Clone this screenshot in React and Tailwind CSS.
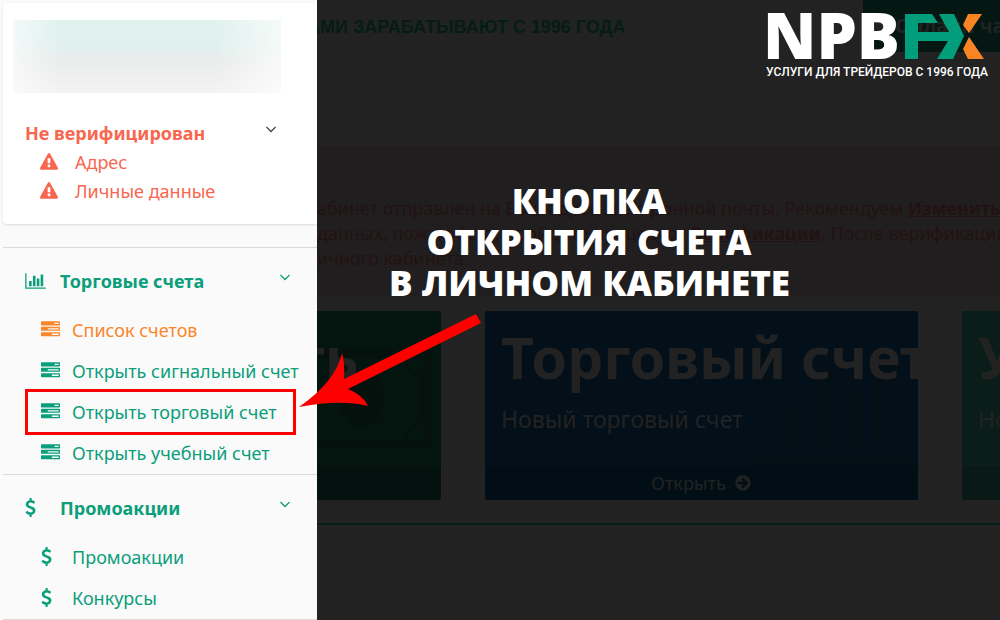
const ICONS = {
  tasks: 'M1024 1408h640v-128h-640v128zm-384-512h1024v-128h-1024v128zm640-512h384v-128h-384v128zm512 832v256q0 26-19 45t-45 19h-1664q-26 0-45-19t-19-45v-256q0-26 19-45t45-19h1664q26 0 45 19t19 45zm0-512v256q0 26-19 45t-45 19h-1664q-26 0-45-19t-19-45v-256q0-26 19-45t45-19h1664q26 0 45 19t19 45zm0-512v256q0 26-19 45t-45 19h-1664q-26 0-45-19t-19-45v-256q0-26 19-45t45-19h1664q26 0 45 19t19 45z',
  chart: 'M640 896v512h-256v-512h256zm384-512v1024h-256v-1024h256zm1024 1152v128h-2048v-1536h128v1408h1920zm-640-896v768h-256v-768h256zm384-384v1152h-256v-1152h256z',
  usd: 'M1362 1185q0 153-99.5 263.5t-258.5 136.5v175q0 14-9 23t-23 9h-135q-13 0-22.5-9.5t-9.5-22.5v-175q-66-9-127.5-31t-101.5-44.5-74-48-46.5-37.5-17.5-18q-17-21-2-41l103-135q7-10 23-12 15-2 24 9l2 2q113 99 243 125 37 8 74 8 81 0 142.5-43t61.5-122q0-28-15-53t-33.5-42-58.5-37.5-66-32-80-32.5q-39-16-61.5-25t-61.5-26.5-62.5-31-56.5-35.5-53.5-42.5-43.5-49-35.5-58-21-66.5-8.5-78q0-138 98-242t255-134v-180q0-13 9.5-22.5t22.5-9.5h135q14 0 23 9t9 23v176q57 6 110.5 23t87 33.5 63.5 37.5 39 29 15 14q17 18 5 38l-81 146q-8 15-23 16-14 3-27-7-3-3-14.5-12t-39-26.5-58.5-32-74.5-26-85.5-11.5q-95 0-155 43t-60 111q0 26 8.5 48t29.5 41.5 39.5 33 56 31 60.5 27 70 27.5q53 20 81 31.5t76 35 75.5 42.5 62 50 53 63.5 31.5 76.5 13 94z',
  warning: 'M1024 1375v-190q0-14-9.5-23.5t-22.5-9.5h-192q-13 0-22.5 9.5t-9.5 23.5v190q0 14 9.5 23.5t22.5 9.5h192q13 0 22.5-9.5t9.5-23.5zm-2-374l18-459q0-12-10-19-13-11-24-11h-220q-11 0-24 11-10 7-10 21l17 457q0 10 10 16.5t24 6.5h185q14 0 23.5-6.5t10.5-16.5zm-14-934l768 1408q35 63-2 126-17 29-46.5 46t-63.5 17h-1536q-34 0-63.5-17t-46.5-46q-37-63-2-126l768-1408q17-31 47-49t65-18 65 18 47 49z',
  arrow: 'M1413 896q0-27-18-45l-91-91-362-362q-18-18-45-18t-45 18l-91 91q-18 18-18 45t18 45l189 189h-502q-26 0-45 19t-19 45v128q0 26 19 45t45 19h502l-189 189q-18 18-18 45t18 45l91 91q18 18 45 18t45-18l362-362 91-91q18-18 18-45zm251 0q0 209-103 385.5t-279.5 279.5-385.5 103-385.5-103-279.5-279.5-103-385.5 103-385.5 279.5-279.5 385.5-103 385.5 103 279.5 279.5 103 385.5z',
  down: 'M1395 736q0 13-10 23l-466 466q-10 10-23 10t-23-10l-466-466q-10-10-10-23t10-23l50-50q10-10 23-10t23 10l393 393 393-393q10-10 23-10t23 10l50 50q10 10 10 23z',
};

function Icon({ name, className }) {
  return (
    <svg viewBox={name === 'chart' ? '0 0 2048 1792' : '0 0 1792 1792'} className={className} fill="currentColor" aria-hidden="true">
      <path d={ICONS[name]} />
    </svg>
  );
}

const accounts = [
  { label: 'Список счетов', active: true },
  { label: 'Открыть сигнальный счет' },
  { label: 'Открыть торговый счет', marked: true },
  { label: 'Открыть учебный счет' },
];

const promos = [{ label: 'Промоакции' }, { label: 'Конкурсы' }];

function MenuGroup({ icon, title, items, itemIcon }) {
  return (
    <section className="ml-[3px] border-t border-[#d9d9d9] text-[#0b9e7a]">
      <button className="flex h-[61px] w-full items-center pt-1 pr-[23px] pl-[22px] text-left text-lg font-bold">
        <span className="w-[35px]">
          <Icon name={icon} className={icon === 'chart' ? 'h-[18px] w-[21px]' : '-ml-1 size-[19px]'} />
        </span>
        <span className="flex-1">{title}</span>
        <Icon name="down" className="mb-2 size-[18px]" />
      </button>
      <ul className="pb-px">
        {items.map((item) => (
          <li key={item.label} className="relative">
            <a href="#" className={`flex h-[41px] items-center pl-[38px] text-lg whitespace-nowrap ${item.active ? 'text-[#fb8529]' : ''}`}>
              <span className="w-[31px]">
                <Icon name={itemIcon} className={itemIcon === 'usd' ? '-ml-1 size-[19px]' : 'size-[19px]'} />
              </span>
              {item.label}
            </a>
            {item.marked && <span className="absolute -top-0.5 -bottom-[3px] left-[22px] w-[271px] border-3 border-[#fe0000]" />}
          </li>
        ))}
      </ul>
    </section>
  );
}

function Sidebar() {
  return (
    <aside className="w-[317px] shrink-0 bg-[#fafafa]">
      <div className="mt-[3px] ml-[3px] h-[221px] rounded-l bg-white pt-[17px] text-[#f8664f] shadow">
        <div className="ml-[10px] h-[73px] w-[268px] bg-[linear-gradient(90deg,#ffffff99,transparent_18%,transparent_75%,#ffffffaa),linear-gradient(180deg,#e0f2ee,#e0f0ed_35%,#ebecec_60%,#f3f3f3)]" />
        <button className="mt-[26px] flex w-full items-center pr-[37px] pl-[22px] text-left text-lg font-bold">
          <span className="flex-1">Не верифицирован</span>
          <Icon name="down" className="mb-2 size-[18px] text-[#444]" />
        </button>
        {['Адрес', 'Личные данные'].map((label) => (
          <a key={label} href="#" className="flex h-[29px] items-center pl-[37px] text-lg">
            <Icon name="warning" className="mr-[17px] size-[18px]" />
            {label}
          </a>
        ))}
      </div>
      <div className="mt-[23px]">
        <MenuGroup icon="chart" title="Торговые счета" items={accounts} itemIcon="tasks" />
        <MenuGroup icon="usd" title="Промоакции" items={promos} itemIcon="usd" />
        <div className="ml-[3px] border-t border-[#d9d9d9]" />
      </div>
    </aside>
  );
}

function Tile({ title, text, action, className, children }) {
  return (
    <article className={`relative flex h-[189px] flex-col overflow-hidden rounded-xs text-[#222222] ${className}`}>
      {children}
      <div className="relative flex-1 px-4 pt-1.5">
        <h2 className="text-[57px] leading-[80px] font-bold whitespace-nowrap">{title}</h2>
        <p className="mt-1.5 text-[23px] leading-8 whitespace-nowrap">{text}</p>
      </div>
      <a href="#" className="relative flex h-[34px] items-center justify-center gap-2 bg-black/10 text-lg">
        {action && (
          <>
            {action}
            <Icon name="arrow" className="size-[18px]" />
          </>
        )}
      </a>
    </article>
  );
}

function Cabinet() {
  return (
    <main className="min-w-0 flex-1 overflow-hidden bg-[#222222]">
      <header className="flex h-[146px] items-start justify-between">
        <p className="-ml-2.5 pt-[13px] font-['Liberation_Sans',sans-serif] text-lg font-bold whitespace-nowrap text-[#051c16]">АМИ ЗАРАБАТЫВАЮТ С 1996 ГОДА</p>
        <button className="flex h-[52px] w-[137px] items-center gap-2 overflow-hidden rounded-bl bg-[#041712] pl-2 text-xl font-bold whitespace-nowrap text-[#222222]">
          <svg viewBox="0 0 16 16" className="size-4 shrink-0" fill="currentColor" aria-hidden="true">
            <path d="M8 1c4 0 7 3 7 6s-3 6-7 6c-1 0-2 0-3-1-1 2-3 3-4 3 1-1 1-3 1-4-1-1-1-2-1-4 0-3 3-6 7-6z" />
          </svg>
          Онлайн чат
        </button>
      </header>
      <div className="h-[151px] border-y border-[#251c1e] bg-[#211e1f] pt-[49px] text-lg leading-[25px] whitespace-nowrap text-[#231213]">
        <p>абинет отправлен на Ваш адрес электронной почты. Рекомендуем <a href="#" className="font-bold underline">Изменить</a></p>
        <p>данных, пожалуйста, пройдите процедуру <a href="#" className="font-bold underline">Верификации</a>. После верификации</p>
        <p>ичного кабинета.</p>
      </div>
      <div className="mt-[14px] grid grid-cols-[124px_1fr_38px] gap-11">
        <Tile title={<span className="-ml-[37px]">ть</span>} className="rounded-l-none bg-[#041510]">
          <svg viewBox="0 0 124 140" className="absolute top-8 left-0 w-full" fill="none" stroke="#04110d" strokeWidth="8" aria-hidden="true">
            <path d="M0 11h112v90H0" />
            <path d="M0 101h88q0-17 18-22V34Q88 30 88 11" strokeWidth="2" />
            <ellipse cx="45" cy="56" rx="22" ry="28" fill="#04110d" stroke="none" />
          </svg>
        </Tile>
        <Tile title="Торговый счет" text="Новый торговый счет" action="Открыть" className="bg-[#031019]">
          <Icon name="chart" className="absolute right-2 bottom-6 w-[154px] text-[#030e15]" />
        </Tile>
        <Tile title="Учебный" text="Новый" className="rounded-r-none bg-[#0b1d19]" />
      </div>
      <div className="mt-[23px] border-t-2 border-[#05201a]" />
    </main>
  );
}

function Logo() {
  return (
    <svg viewBox="0 0 222 70" className="absolute top-[10px] right-[12px] w-[222px] overflow-visible" role="img" aria-label="NPBFX">
      <text x="-3" y="49" fill="#fff" fontFamily="Open Sans, sans-serif" fontSize="64" fontWeight="800">NPB</text>
      <path fill="#029e7b" d="M139 4h27l6 9h-20v9h31l-10-18h15l10 22-11 23h-16l11-18h-30v18h-13z" />
      <path fill="#f98423" d="M202 4h14l-13 19-6-8zM203 27l15 22h-16l-5-10z" />
      <text x="0" y="66" fill="#fff" fontFamily="Roboto, sans-serif" fontSize="12" fontWeight="500">УСЛУГИ ДЛЯ ТРЕЙДЕРОВ С 1996 ГОДА</text>
    </svg>
  );
}

export default function App() {
  return (
    <div className="relative flex min-h-screen overflow-hidden bg-[#222222] font-['Noto_Sans',sans-serif]">
      <Sidebar />
      <Cabinet />
      <Logo />
      <h1 className="absolute top-[180px] left-[389px] w-[400px] text-center font-['Open_Sans',sans-serif] text-[35px] leading-[41px] font-extrabold whitespace-nowrap text-white">
        КНОПКА
        <br />
        ОТКРЫТИЯ СЧЕТА
        <br />
        В ЛИЧНОМ КАБИНЕТЕ
      </h1>
      <svg viewBox="0 0 184 96" className="absolute top-[312px] left-[298px] w-[184px]" fill="#fe0000" aria-hidden="true">
        <path d="M1 95Q38 69 44 41Q47 51 46 67L178 2l5 9L50 77Q65 83 70 94Q42 87 1 95z" />
      </svg>
    </div>
  );
}
